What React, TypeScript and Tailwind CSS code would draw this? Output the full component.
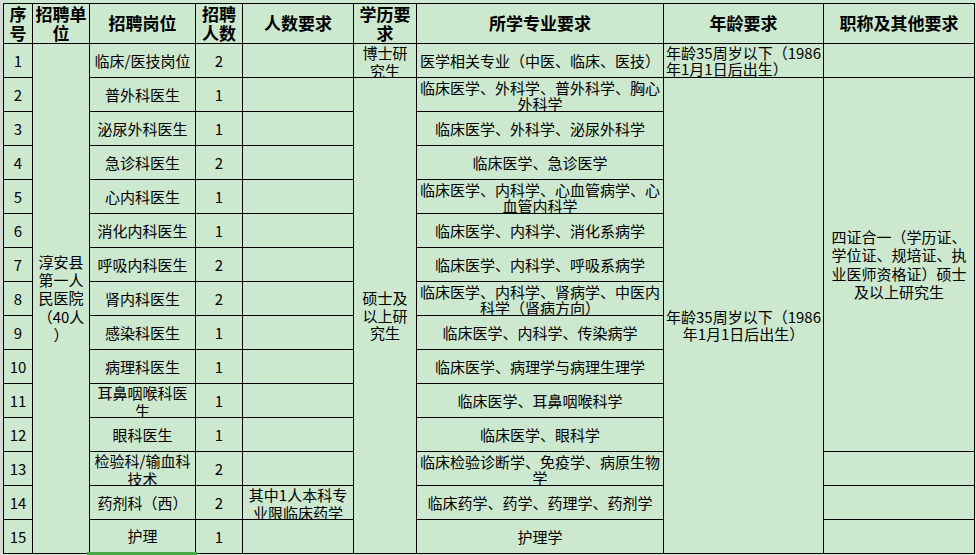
import React from 'react';

type Row = {
  no: number;
  post: string[];
  count: number;
  req?: string[];
  major: string[];
  title?: boolean;
};

const rows: Row[] = [
  { no: 1, post: ['临床/医技岗位'], count: 2, major: ['医学相关专业（中医、临床、医技）'] },
  { no: 2, post: ['普外科医生'], count: 1, major: ['临床医学、外科学、普外科学、胸心', '外科学'] },
  { no: 3, post: ['泌尿外科医生'], count: 1, major: ['临床医学、外科学、泌尿外科学'] },
  { no: 4, post: ['急诊科医生'], count: 2, major: ['临床医学、急诊医学'] },
  { no: 5, post: ['心内科医生'], count: 1, major: ['临床医学、内科学、心血管病学、心', '血管内科学'] },
  { no: 6, post: ['消化内科医生'], count: 1, major: ['临床医学、内科学、消化系病学'] },
  { no: 7, post: ['呼吸内科医生'], count: 2, major: ['临床医学、内科学、呼吸系病学'] },
  { no: 8, post: ['肾内科医生'], count: 2, major: ['临床医学、内科学、肾病学、中医内', '科学（肾病方向）'] },
  { no: 9, post: ['感染科医生'], count: 1, major: ['临床医学、内科学、传染病学'] },
  { no: 10, post: ['病理科医生'], count: 1, major: ['临床医学、病理学与病理生理学'] },
  { no: 11, post: ['耳鼻咽喉科医', '生'], count: 1, major: ['临床医学、耳鼻咽喉科学'] },
  { no: 12, post: ['眼科医生'], count: 1, major: ['临床医学、眼科学'] },
  { no: 13, post: ['检验科/输血科', '技术'], count: 2, major: ['临床检验诊断学、免疫学、病原生物', '学'], title: true },
  { no: 14, post: ['药剂科（西）'], count: 2, req: ['其中1人本科专', '业限临床药学'], major: ['临床药学、药学、药理学、药剂学'], title: true },
  { no: 15, post: ['护理'], count: 1, major: ['护理学'], title: true },
];

const base = 'bg-[#cce8cf] flex justify-center text-center overflow-hidden whitespace-nowrap';

// one line sits in the middle, two lines start at the top and get clipped like in the sheet
const Cell = ({
  lines,
  lh = 'leading-[18px]',
  mid = false,
  className = '',
}: {
  lines?: string[];
  lh?: string;
  mid?: boolean;
  className?: string;
}) => (
  <div className={`${base} ${lh} ${lines && lines.length > 1 && !mid ? 'items-start' : 'items-center'} ${className}`}>
    <div>
      {lines?.map((l, i) => (
        <React.Fragment key={i}>
          {i > 0 && <br />}
          {l}
        </React.Fragment>
      ))}
    </div>
  </div>
);

const Head = ({ lines }: { lines: string[] }) => (
  <div className={`${base} items-center font-bold text-[17px] leading-[18.5px]`}>
    <div>
      {lines.map((l, i) => (
        <React.Fragment key={i}>
          {i > 0 && <br />}
          {l}
        </React.Fragment>
      ))}
    </div>
  </div>
);

export default function App() {
  return (
    <div
      className="w-[976px] h-[555px] overflow-hidden bg-[#cce8cf] flex text-black text-[15px]"
      style={{ fontFamily: '"Noto Sans CJK SC", "Liberation Sans", sans-serif' }}
    >
      <div className="w-[3px] shrink-0 bg-[#d6dbd6]" />
      <div className="pt-[3px]">
        <div className="grid grid-cols-[28px_56px_105px_46px_110px_62px_246px_159px_150px] grid-rows-[39px_repeat(15,33px)] gap-px bg-black p-px">
          {/* merged blocks */}
          <Cell
            mid
            className="col-start-2 row-start-2 row-span-15"
            lh="leading-[18.3px]"
            lines={['淳安县', '第一人', '民医院', '（40人', '）']}
          />
          <Cell mid className="col-start-6 row-start-3 row-span-14" lh="leading-[17.5px]" lines={['硕士及', '以上研', '究生']} />
          <div className={`${base} items-center col-start-8 row-start-3 row-span-14 leading-[17px] pt-[18px]`}>
            <div>
              年龄35周岁以下（1986
              <br />
              年1月1日后出生）
            </div>
          </div>
          <div className={`${base} items-center col-start-9 row-start-3 row-span-11 leading-[18.3px]`}>
            <div>
              四证合一（学历证、
              <br />
              学位证、规培证、执
              <br />
              业医师资格证）硕士
              <br />
              及以上研究生
            </div>
          </div>

          <Head lines={['序', '号']} />
          <Head lines={['招聘单', '位']} />
          <Head lines={['招聘岗位']} />
          <Head lines={['招聘', '人数']} />
          <Head lines={['人数要求']} />
          <Head lines={['学历要', '求']} />
          <Head lines={['所学专业要求']} />
          <Head lines={['年龄要求']} />
          <Head lines={['职称及其他要求']} />

          {rows.map((r) => (
            <React.Fragment key={r.no}>
              <Cell lines={[String(r.no)]} />
              {r.no === 15 ? (
                <div className={`${base} items-center relative overflow-visible`}>
                  护理
                  <div className="absolute left-[-3px] right-[-2px] bottom-[-3px] h-[4px] bg-[#4aa846]" />
                </div>
              ) : (
                <Cell lines={r.post} />
              )}
              <Cell lines={[String(r.count)]} />
              <Cell lines={r.req} />
              {r.no === 1 && <Cell lines={['博士研', '究生']} />}
              <Cell lines={r.major} lh="leading-[16px]" className={r.major.length > 1 ? 'pt-[2px]' : ''} />
              {r.no === 1 && (
                <div className={`${base} items-start justify-start text-left leading-[16px] pl-[2px] pt-[1px]`}>
                  <div>
                    年龄35周岁以下（1986
                    <br />
                    年1月1日后出生）
                  </div>
                </div>
              )}
              {(r.no === 1 || r.title) && <Cell />}
            </React.Fragment>
          ))}
        </div>
      </div>
    </div>
  );
}
